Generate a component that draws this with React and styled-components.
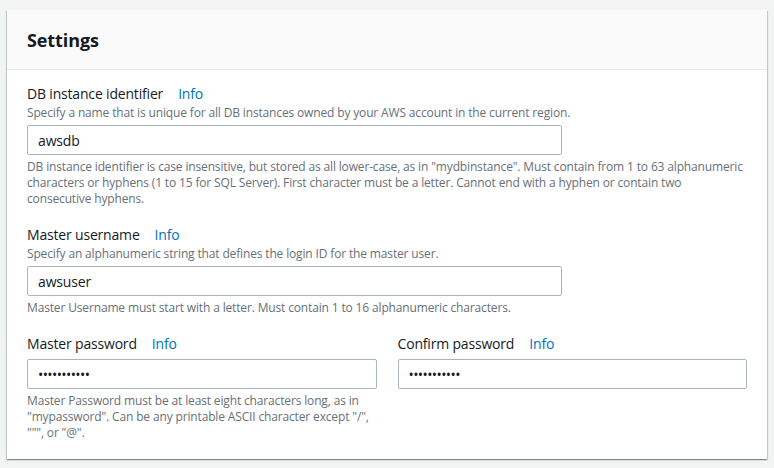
import React from 'react'
import styled, { createGlobalStyle } from 'styled-components'

const GlobalStyle = createGlobalStyle`
  html, body {
    margin: 0;
    padding: 0;
    background: #f2f3f3;
  }
  body {
    font-family: "Open Sans", "Liberation Sans", sans-serif;
    color: #16191f;
  }
`

const Page = styled.div`
  padding: 10px 7px;
`

const Card = styled.div`
  background: #fff;
  box-shadow: 0 1px 1px 0 rgba(0, 28, 36, 0.3), 1px 1px 1px 0 rgba(0, 28, 36, 0.15),
    -1px 1px 1px 0 rgba(0, 28, 36, 0.15);
`

const CardHeader = styled.div`
  background: #fafafa;
  border-bottom: 1px solid #eaeded;
  padding: 20px 20px 18px;
  h2 {
    margin: 0;
    font-size: 18px;
    line-height: 21px;
    font-weight: 700;
    letter-spacing: -0.1px;
  }
`

const CardBody = styled.div`
  padding: 13px 20px 18px;
  display: flex;
  flex-direction: column;
  gap: 17px;
`

const Columns = styled.div`
  display: grid;
  grid-template-columns: 1fr 1fr;
  gap: 21px;
`

const Field = styled.div`
  display: flex;
  flex-direction: column;
  gap: 4px;
`

const LabelBlock = styled.div`
  display: flex;
  flex-direction: column;
`

const LabelRow = styled.div`
  display: flex;
  align-items: baseline;
  gap: 15px;
  font-size: 14px;
  line-height: 22px;
  letter-spacing: -0.18px;
`

const Info = styled.a`
  color: #0073bb;
  text-decoration: none;
  cursor: pointer;
`

const Description = styled.div`
  font-size: 12px;
  line-height: 16px;
  color: #687078;
  letter-spacing: -0.15px;
`

const Input = styled.input`
  box-sizing: border-box;
  width: ${(p) => p.$width || '100%'};
  height: 30px;
  padding: 0 10px;
  border: 1px solid #aab7b8;
  border-radius: 2px;
  font-family: inherit;
  font-size: 14px;
  letter-spacing: ${(p) => (p.type === 'password' ? '-0.6px' : '-0.15px')};
  color: #16191f;
  background: #fff;
  outline: none;
`

const Constraint = styled.div`
  font-size: 12px;
  line-height: 16px;
  color: #687078;
  letter-spacing: -0.15px;
`

function FormField({ label, description, value, type, width, constraint }) {
  return (
    <Field>
      <LabelBlock>
        <LabelRow>
          <span>{label}</span>
          <Info>Info</Info>
        </LabelRow>
        {description && <Description>{description}</Description>}
      </LabelBlock>
      <Input type={type || 'text'} value={value} readOnly $width={width} />
      {constraint && <Constraint>{constraint}</Constraint>}
    </Field>
  )
}

export default function App() {
  return (
    <Page>
      <GlobalStyle />
      <Card>
        <CardHeader>
          <h2>Settings</h2>
        </CardHeader>
        <CardBody>
          <FormField
            label="DB instance identifier"
            description="Specify a name that is unique for all DB instances owned by your AWS account in the current region."
            value="awsdb"
            width="535px"
            constraint={'DB instance identifier is case insensitive, but stored as all lower-case, as in "mydbinstance". Must contain from 1 to 63 alphanumeric characters or hyphens (1 to 15 for SQL Server). First character must be a letter. Cannot end with a hyphen or contain two consecutive hyphens.'}
          />
          <FormField
            label="Master username"
            description="Specify an alphanumeric string that defines the login ID for the master user."
            value="awsuser"
            width="535px"
            constraint="Master Username must start with a letter. Must contain 1 to 16 alphanumeric characters."
          />
          <Columns>
            <FormField
              label="Master password"
              type="password"
              value="awspassword"
              constraint={'Master Password must be at least eight characters long, as in "mypassword". Can be any printable ASCII character except "/", """, or "@".'}
            />
            <FormField label="Confirm password" type="password" value="awspassword" />
          </Columns>
        </CardBody>
      </Card>
    </Page>
  )
}
